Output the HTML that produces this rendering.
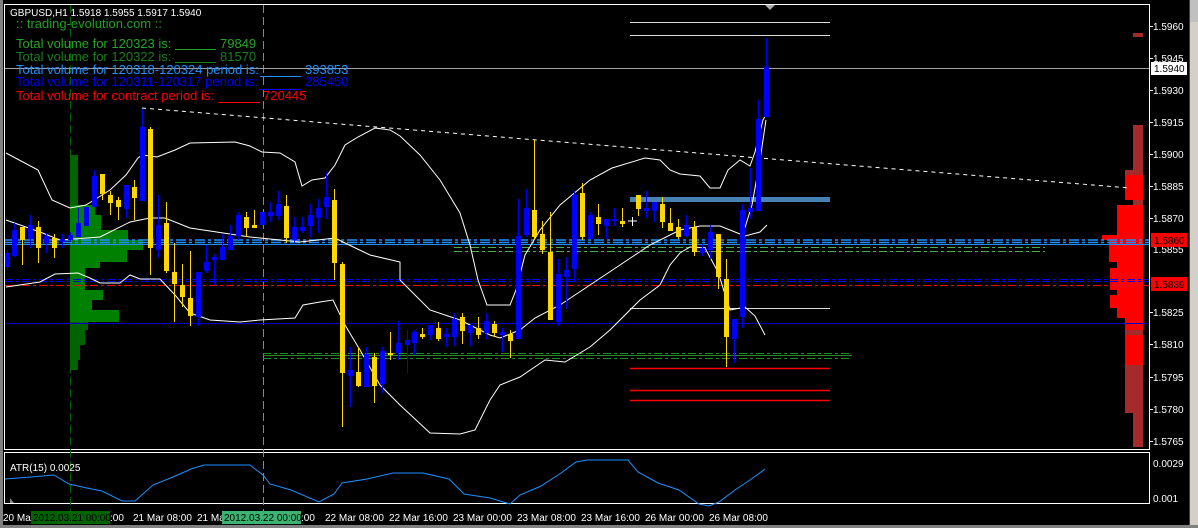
<!DOCTYPE html>
<html><head><meta charset="utf-8">
<style>
html,body{margin:0;padding:0;background:#000;width:1198px;height:528px;overflow:hidden}
svg{display:block}
text{font-family:"Liberation Sans",Arial,sans-serif}
</style></head><body>
<svg id="s" width="1198" height="528" xmlns="http://www.w3.org/2000/svg">
<rect width="1198" height="528" fill="#000"/>
<rect x="0" y="0" width="3" height="528" fill="#808080"/>
<rect x="1190" y="0" width="8" height="528" fill="#c0c0c0"/>
<rect x="1190" y="22" width="8" height="506" fill="#d4d0c8"/>
<rect x="1189" y="0" width="1" height="528" fill="#404040"/>
<rect x="0" y="525" width="1198" height="3" fill="#808080"/>
<rect x="4.5" y="4.5" width="1145" height="445" fill="none" stroke="#fff" stroke-width="1"/>
<rect x="4.5" y="452.5" width="1145" height="51" fill="none" stroke="#fff" stroke-width="1"/>
<line x1="70.5" y1="5" x2="70.5" y2="515" stroke="#006400" stroke-dasharray="8,4"/>
<line x1="263.5" y1="5" x2="263.5" y2="515" stroke="#3cb371" stroke-dasharray="8,4"/>
<g id="prof"></g>
<line x1="5" y1="68.5" x2="1149" y2="68.5" stroke="#a0a0a0"/>
<line x1="5" y1="240" x2="1149" y2="240" stroke="#1e90ff" stroke-width="1.5" stroke-dasharray="10,3,3,3"/>
<line x1="5" y1="242.5" x2="1149" y2="242.5" stroke="#1e90ff" stroke-width="1.5" stroke-dasharray="10,3,3,3"/>
<line x1="5" y1="244.5" x2="1149" y2="244.5" stroke="#1e90ff" stroke-width="1"/>
<line x1="454" y1="247.5" x2="1045" y2="247.5" stroke="#4caf50" stroke-dasharray="8,3,3,3"/>
<line x1="454" y1="251.5" x2="1045" y2="251.5" stroke="#4caf50" stroke-dasharray="8,3,3,3"/>
<line x1="5" y1="279.5" x2="1149" y2="279.5" stroke="#0000ff" stroke-dasharray="8,3,3,3"/>
<line x1="5" y1="281.5" x2="1149" y2="281.5" stroke="#0000ff" stroke-dasharray="8,3,3,3"/>
<line x1="5" y1="285.5" x2="1149" y2="285.5" stroke="#ff0000" stroke-dasharray="8,3,3,3"/>
<line x1="5" y1="323.5" x2="1149" y2="323.5" stroke="#0000cd"/>
<line x1="263" y1="353.5" x2="852" y2="353.5" stroke="#228b22" stroke-dasharray="8,3,3,3"/>
<line x1="263" y1="355.5" x2="852" y2="355.5" stroke="#228b22"/>
<line x1="263" y1="358.5" x2="852" y2="358.5" stroke="#228b22" stroke-dasharray="8,3,3,3"/>
<line x1="630" y1="22.5" x2="830" y2="22.5" stroke="#ddd"/>
<line x1="630" y1="35.5" x2="830" y2="35.5" stroke="#ddd"/>
<line x1="630" y1="308.5" x2="830" y2="308.5" stroke="#ddd"/>
<line x1="630" y1="368.5" x2="830" y2="368.5" stroke="#ff0000" stroke-width="1.5"/>
<line x1="630" y1="390.5" x2="830" y2="390.5" stroke="#ff0000" stroke-width="1.5"/>
<line x1="630" y1="400.5" x2="830" y2="400.5" stroke="#ff0000" stroke-width="1.5"/>
<rect x="630" y="197" width="200" height="5" fill="#4682b4"/>
<line x1="142" y1="108" x2="1130" y2="188" stroke="#fff" stroke-dasharray="4,4"/>
<polygon points="765,5 775,5 770,10" fill="#aaa"/>
<polyline fill="none" stroke="#fff" points="6,153 38,170 52,200 70,208 86,205 110,190 126,175 138,158 142,155 157,157 175,150 190,143 235,142 250,146 262,152 280,153 295,162 302,186 312,180 325,178 335,165 345,145 358,137 375,128 390,130 400,136 420,155 440,180 460,213 470,245 478,280 487,305 510,305 516,290 525,255 540,230 560,205 590,180 612,168 645,158 660,160 670,170 680,174 700,176 710,188 720,188 728,170 740,160 750,166 755,152 763,120 768,110"/>
<polyline fill="none" stroke="#fff" points="6,220 40,232 60,240 100,237 130,222 150,218 165,218 190,228 250,237 280,240 300,242 335,238 345,243 370,255 400,262 400,280 430,310 460,320 490,335 500,338 520,330 535,318 560,305 590,285 620,265 650,245 680,230 700,226 720,226 735,232 745,236 760,232 767,225"/>
<polyline fill="none" stroke="#fff" points="6,287 40,282 55,274 78,273 90,278 100,283 120,283 130,275 140,279 160,279 175,295 190,313 210,320 240,322 260,320 295,318 303,305 320,302 333,300 345,325 360,350 380,385 400,405 430,433 460,434 475,430 490,400 500,385 520,377 545,360 565,362 590,347 610,330 640,300 660,285 670,265 680,253 690,247 705,248 718,272 730,310 745,307 755,316 765,335"/>
<polyline fill="none" stroke="#fff" points="742,237 752,205 760,160 766,120"/>
<g id="cand"></g>
<polyline fill="none" stroke="#1e90ff" points="5,479 31,477 54,475 69,484 87,488 102,491 122,501 135,501 153,485 173,477 191,469 204,465 224,465 250,465 263,475 270,484 291,490 319,502 334,494 342,483 367,479 393,473 423,473 449,479 464,494 490,498 510,504 520,495 541,486 561,473 576,462 587,460 628,460 638,472 658,483 679,490 699,504 709,506 719,502 735,490 750,480 765,469"/>
<polygon points="10,498 14,503 10,503" fill="#888"/>
<text x="10" y="16" fill="#fff" font-size="10">GBPUSD,H1  1.5918 1.5955 1.5917 1.5940</text>
<text x="16" y="28" fill="#22a022" font-size="13">:: trading-evolution.com ::</text>
<text x="16" y="48" fill="#25a525" font-size="13">Total volume for 120323 is:</text>
<line x1="175" y1="49.5" x2="216" y2="49.5" stroke="#25a525"/>
<text x="220" y="48" fill="#25a525" font-size="13">79849</text>
<text x="16" y="61" fill="#1a7f1a" font-size="13">Total volume for 120322 is:</text>
<line x1="175" y1="62.5" x2="216" y2="62.5" stroke="#1a7f1a"/>
<text x="220" y="61" fill="#1a7f1a" font-size="13">81570</text>
<text x="16" y="74" fill="#1e90ff" font-size="13">Total volume for 120318-120324 period is:</text>
<line x1="260" y1="76.5" x2="301" y2="76.5" stroke="#1e90ff"/>
<text x="305" y="74" fill="#1e90ff" font-size="13">393853</text>
<text x="16" y="86" fill="#0000ff" font-size="13">Total volume for 120311-120317 period is:</text>
<line x1="259" y1="89.5" x2="301" y2="89.5" stroke="#0000ff"/>
<text x="305" y="86" fill="#0000ff" font-size="13">285450</text>
<text x="16" y="100" fill="#ff0000" font-size="13">Total volume for contract period is:</text>
<line x1="218" y1="102.5" x2="260" y2="102.5" stroke="#ff0000"/>
<text x="263" y="100" fill="#ff0000" font-size="13">720445</text>
<text x="10" y="471" fill="#fff" font-size="10">ATR(15) 0.0025</text>
<g fill="#fff" font-size="10">
<text x="1153" y="30">1.5960</text><text x="1153" y="62">1.5945</text><text x="1153" y="94">1.5930</text>
<text x="1153" y="126">1.5915</text><text x="1153" y="158">1.5900</text><text x="1153" y="190">1.5885</text>
<text x="1153" y="222">1.5870</text><text x="1153" y="253">1.5855</text><text x="1153" y="316">1.5825</text>
<text x="1153" y="348">1.5810</text><text x="1153" y="381">1.5795</text><text x="1153" y="413">1.5780</text>
<text x="1153" y="445">1.5765</text><text x="1153" y="467">0.0029</text><text x="1153" y="502">0.001</text>
</g>
<g stroke="#fff"><line x1="1150" y1="26.5" x2="1153" y2="26.5"/><line x1="1150" y1="58.5" x2="1153" y2="58.5"/><line x1="1150" y1="90.5" x2="1153" y2="90.5"/><line x1="1150" y1="122.5" x2="1153" y2="122.5"/><line x1="1150" y1="154.5" x2="1153" y2="154.5"/><line x1="1150" y1="186.5" x2="1153" y2="186.5"/><line x1="1150" y1="218.5" x2="1153" y2="218.5"/><line x1="1150" y1="312.5" x2="1153" y2="312.5"/><line x1="1150" y1="344.5" x2="1153" y2="344.5"/><line x1="1150" y1="377.5" x2="1153" y2="377.5"/><line x1="1150" y1="409.5" x2="1153" y2="409.5"/><line x1="1150" y1="441.5" x2="1153" y2="441.5"/></g>
<rect x="1151" y="62" width="36" height="13" fill="#fff"/>
<text x="1154" y="72" fill="#000" font-size="10">1.5940</text>
<rect x="1151" y="233" width="36" height="14" fill="#ff0000"/>
<text x="1154" y="244" fill="#000" font-size="10">1.5860</text>
<rect x="1151" y="277" width="36" height="14" fill="#ff0000"/>
<text x="1154" y="288" fill="#000" font-size="10">1.5839</text>
<g fill="#fff" font-size="10">
<text x="3" y="521">20 Ma</text><text x="110" y="521">:00</text><text x="133" y="521">21 Mar 08:00</text>
<text x="197" y="521">21 Ma</text><text x="301" y="521">:00</text>
<text x="325" y="521">22 Mar 08:00</text><text x="389" y="521">22 Mar 16:00</text><text x="453" y="521">23 Mar 00:00</text>
<text x="517" y="521">23 Mar 08:00</text><text x="581" y="521">23 Mar 16:00</text><text x="645" y="521">26 Mar 00:00</text>
<text x="709" y="521">26 Mar 08:00</text>
</g>
<rect x="31" y="511" width="79" height="13" fill="#006400"/>
<text x="33" y="521" fill="#000" font-size="10">2012.03.21 00:00</text>
<rect x="222" y="511" width="79" height="13" fill="#3cb371"/>
<text x="224" y="521" fill="#000" font-size="10">2012.03.22 00:00</text>
</svg>
<script>
var C=[[7,253,267,250,270,'b'],[14,230,256,223,257,'b'],[22,227,240,227,265,'y'],[30,225,239,215,248,'b'],[38,227,248,221,263,'y'],[46,236,243,233,253,'b'],[54,238,248,234,258,'y'],[62,239,242,234,248,'b'],[70,235,240,232,242,'b'],[78,223,237,208,237,'b'],[86,207,226,207,226,'b'],[94,176,207,170,207,'b'],[102,174,194,174,200,'y'],[110,195,203,191,215,'y'],[118,200,207,197,220,'y'],[126,185,209,185,218,'b'],[134,187,198,180,220,'y'],[142,127,201,109,201,'b'],[150,129,248,127,275,'y'],[158,225,250,195,258,'b'],[166,223,271,202,273,'y'],[174,272,284,243,322,'y'],[182,285,297,264,307,'y'],[190,298,316,251,326,'y'],[198,272,317,272,326,'b'],[206,262,271,245,273,'b'],[214,257,260,254,285,'b'],[222,247,260,234,260,'b'],[230,236,250,225,250,'b'],[238,215,236,212,240,'b'],[246,217,228,212,237,'y'],[254,225,228,210,228,'y'],[262,212,225,212,225,'b'],[270,212,216,202,222,'b'],[278,204,216,191,220,'b'],[286,206,238,195,243,'y'],[294,227,240,217,243,'b'],[302,227,231,217,233,'b'],[310,215,226,204,237,'b'],[318,208,218,199,233,'b'],[326,197,207,172,219,'b'],[334,200,263,189,280,'y'],[342,264,373,262,427,'y'],[350,370,376,347,407,'b'],[358,372,386,347,387,'y'],[366,354,387,347,387,'b'],[374,357,386,353,403,'y'],[382,351,384,347,393,'b'],[390,353,355,332,360,'y'],[398,343,353,321,360,'b'],[407,340,345,330,373,'b'],[414,332,343,330,355,'b'],[422,334,337,328,339,'y'],[430,325,335,325,340,'b'],[438,328,339,322,341,'y'],[446,334,337,328,347,'b'],[454,319,337,313,346,'b'],[462,317,331,313,344,'y'],[470,325,333,325,346,'b'],[478,328,335,317,339,'y'],[486,321,333,313,339,'b'],[494,324,333,321,337,'y'],[502,332,335,328,352,'b'],[510,334,341,330,358,'y'],[518,236,339,199,339,'b'],[526,208,235,189,237,'b'],[534,210,237,140,240,'y'],[542,234,250,221,254,'y'],[550,252,320,212,320,'y'],[558,274,322,259,326,'b'],[566,270,277,257,309,'b'],[574,195,269,191,282,'b'],[582,193,237,183,240,'y'],[590,215,239,212,239,'b'],[598,217,224,204,235,'y'],[606,219,226,219,239,'b'],[614,219,221,208,226,'b'],[622,221,224,208,227,'y'],[638,195,209,195,216,'y'],[646,208,211,191,218,'b'],[654,202,211,202,222,'b'],[662,204,222,197,228,'y'],[670,223,231,208,231,'y'],[678,227,237,219,239,'y'],[686,225,236,215,237,'b'],[694,227,252,221,256,'y'],[702,248,253,244,256,'b'],[710,232,250,225,259,'b'],[718,234,277,234,289,'y'],[726,279,337,259,367,'y'],[734,319,339,319,363,'b'],[742,210,317,204,328,'b'],[750,208,212,168,219,'b'],[758,119,211,100,211,'b'],[766,67,117,38,117,'b']];
var h='';C.forEach(function(c){var col=c[5]=='b'?'#0000ff':'#ffd700';h+='<line x1="'+(c[0]+0.5)+'" y1="'+c[3]+'" x2="'+(c[0]+0.5)+'" y2="'+c[4]+'" stroke="'+col+'"/><rect x="'+(c[0]-2)+'" y="'+c[1]+'" width="5" height="'+Math.max(2,c[2]-c[1])+'" fill="'+col+'"/>';});
h+='<path d="M628,221h9M632.5,217v9" stroke="#fff"/>';
document.getElementById('cand').innerHTML=h;
var G=[[155,205,78,'#006400'],[205,215,95,'#008000'],[215,230,101,'#008000'],[230,240,128,'#008000'],[240,250,143,'#008000'],[250,262,127,'#008000'],[262,268,100,'#008000'],[268,290,85,'#008000'],[290,300,103,'#008000'],[300,310,92,'#008000'],[310,322,119,'#008000'],[322,330,88,'#006400'],[330,345,85,'#006400'],[345,360,80,'#006400'],[360,370,78,'#006400']];
var R=[[125,170,1133,'#a52a2a'],[170,175,1125,'#a52a2a'],[175,200,1125,'#ff0000'],[200,205,1133,'#a52a2a'],[205,235,1117,'#ff0000'],[235,240,1102,'#ff0000'],[240,262,1109,'#ff0000'],[262,268,1117,'#ff0000'],[268,290,1110,'#ff0000'],[290,295,1117,'#ff0000'],[295,308,1110,'#ff0000'],[308,318,1117,'#ff0000'],[318,330,1125,'#ff0000'],[330,335,1125,'#a52a2a'],[335,365,1125,'#ff0000'],[365,413,1125,'#a52a2a'],[413,447,1133,'#a52a2a'],[33,37,1133,'#a52a2a']];
var p='';G.forEach(function(g){p+='<rect x="70" y="'+g[0]+'" width="'+(g[2]-70)+'" height="'+(g[1]-g[0])+'" fill="'+g[3]+'"/>';});
R.forEach(function(r){p+='<rect x="'+r[2]+'" y="'+r[0]+'" width="'+(1143-r[2])+'" height="'+(r[1]-r[0])+'" fill="'+r[3]+'"/>';});
document.getElementById('prof').innerHTML=p;
</script>
</body></html>
